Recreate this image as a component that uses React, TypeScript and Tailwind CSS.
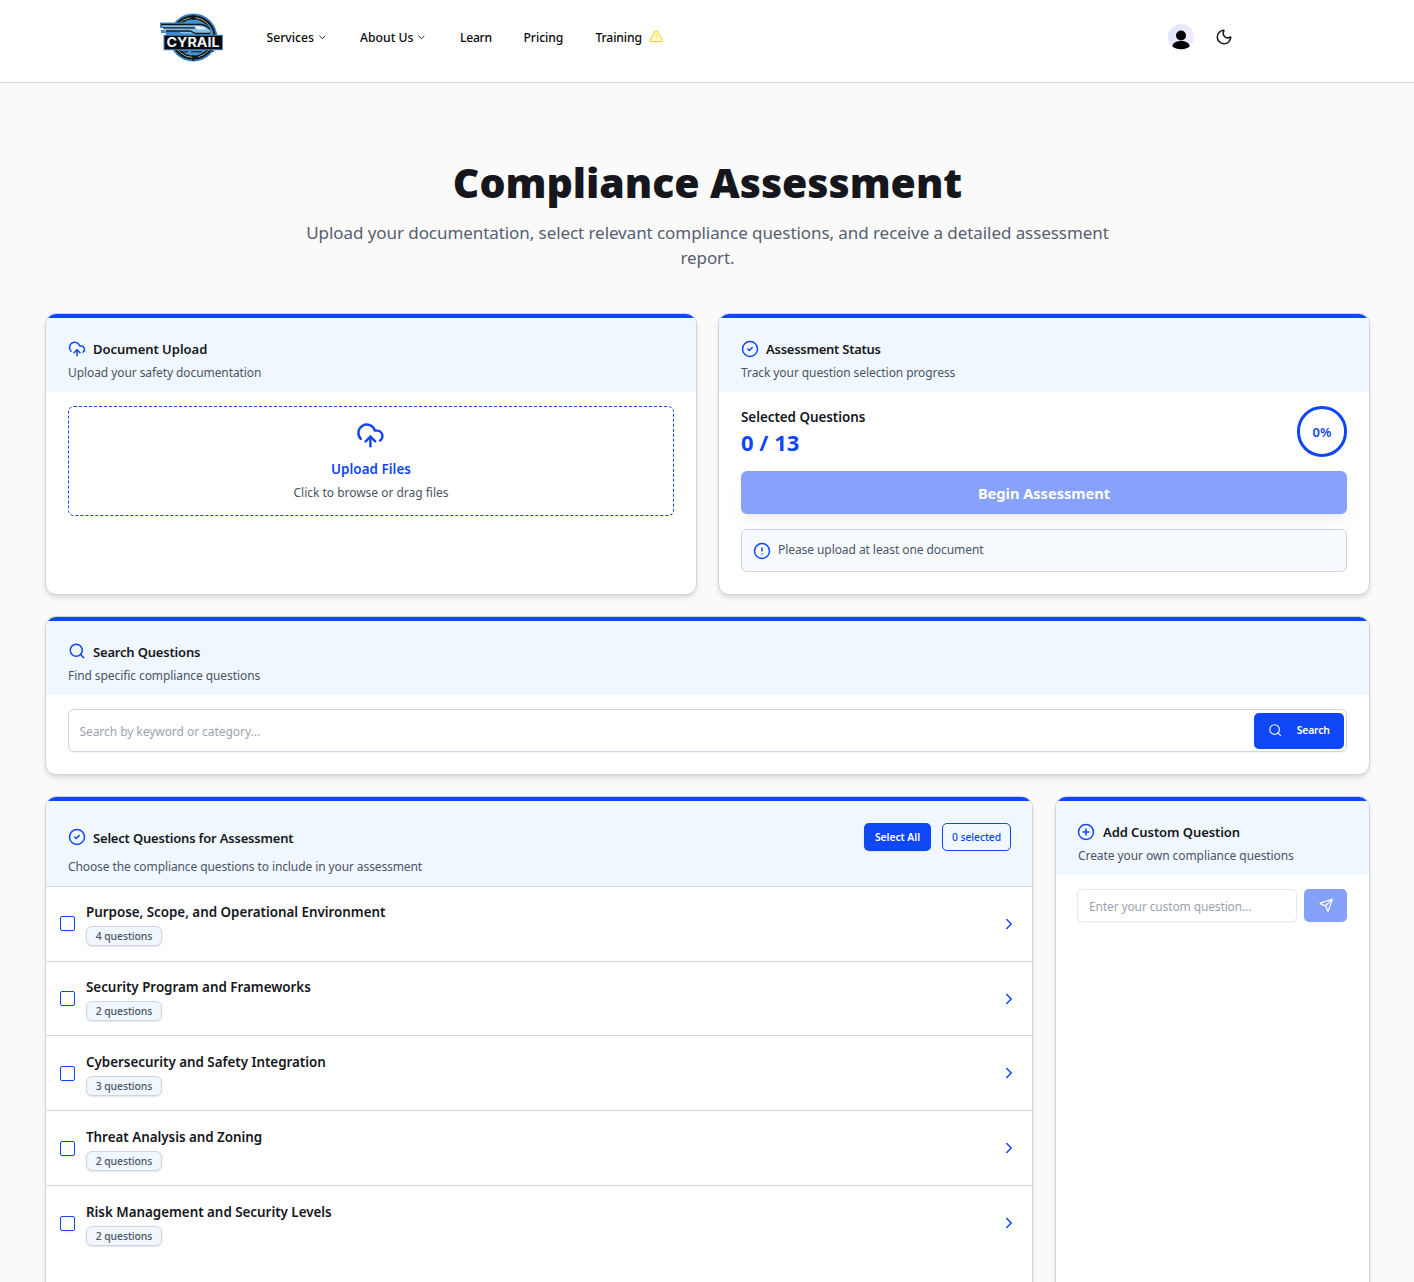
import type { ReactNode } from "react";
import {
  ChevronDown,
  ChevronRight,
  CircleAlert,
  CircleCheck,
  CirclePlus,
  CloudUpload,
  Moon,
  Search,
  Send,
  TriangleAlert,
} from "lucide-react";

function Logo() {
  return (
    <svg width="64" height="50" viewBox="0 0 64 50" className="block">
      <circle cx="33.3" cy="24.5" r="24" fill="#3a7fbd" />
      <circle cx="33.3" cy="24.5" r="22.3" fill="#10161d" />
      <circle cx="33.3" cy="24.5" r="20" fill="none" stroke="#b9ad72" strokeWidth="1" strokeDasharray="26 6" />
      <circle cx="33.3" cy="24.5" r="18" fill="#4a93d0" />
      <path d="M33.3 2v5M33.3 42v6" stroke="#10161d" strokeWidth="1.4" />
      <path d="M0 9.500h38c8 0 13 4 14.500 8.500v5H6v-3H1v-3h4v-2H0z" fill="#3f8bca" />
      <path d="M2 11.800h36c6 0 10.500 3 12.500 6.200L48 20.500H22l-4-2H5" fill="#86bfe8" />
      <path d="M1 11.500h38c5 0 9 2 11 5M3 14.800h32M6 18h24l6 2.500h14" fill="none" stroke="#0d1822" strokeWidth="1.300" />
      <path d="M34 13.200h5c4 .3 6.500 2 7.500 3.300H38z" fill="#e4f2fb" />
      <path d="M3.500 21.800h59.500v15.500h-59.500z" fill="#4a90cc" />
      <path d="M4.500 22.800h57.500v13.400h-57.500z" fill="#07090d" />
      <text
        x="33"
        y="33.900"
        textAnchor="middle"
        textLength="53"
        lengthAdjust="spacingAndGlyphs"
        fontFamily="Inter, sans-serif"
        fontWeight="700"
        fontSize="13"
        fill="#f4f7f8"
      >
        CYRAIL
      </text>
      <path d="M22 38.800h6M31 38.800h11M52 38.300h2" stroke="#10161d" strokeWidth="1" />
    </svg>
  );
}

function Avatar() {
  return (
    <div className="h-[26px] w-[26px] overflow-hidden rounded-full bg-linear-to-r from-[#e0e7ff] to-[#f3e8ff]">
      <svg width="26" height="26" viewBox="0 0 26 26" fill="#000">
        <circle cx="13" cy="11.500" r="5" />
        <path d="M4.300 22.300C5 18.500 8.600 17 13 17s8 1.500 8.700 5.300C19.500 24.500 16.500 25.300 13 25.300s-6.500-.8-8.700-3z" />
      </svg>
    </div>
  );
}

function Card({ className, children }: { className?: string; children: ReactNode }) {
  return (
    <section
      className={
        "overflow-hidden rounded-[11px] border border-[#ced5e1] bg-white shadow-[0_4px_6px_-1px_rgba(0,0,0,0.1),0_2px_4px_-2px_rgba(0,0,0,0.1)] " +
        (className ?? "")
      }
    >
      <div className="h-1 bg-[#0f46f5]" />
      {children}
    </section>
  );
}

function CardHeader({
  icon,
  title,
  text,
  titleClass,
}: {
  icon: ReactNode;
  title: string;
  text: string;
  titleClass: string;
}) {
  return (
    <div className="h-[74px] bg-[#f0f7ff] px-[22px] pt-[22px]">
      <div className="flex h-[18px] items-center gap-[7px] text-[#0f46f5]">
        {icon}
        <h3 className={"text-[13px] leading-[18px] font-semibold text-[#15171c] " + titleClass}>{title}</h3>
      </div>
      <p className="mt-[6px] text-[12px] leading-[18px] tracking-[-0.08px] text-[#4b5565]">{text}</p>
    </div>
  );
}

const groups = [
  { title: "Purpose, Scope, and Operational Environment", count: 4, row: "h-[75px]", lead: "mt-[15px]" },
  { title: "Security Program and Frameworks", count: 2, row: "h-[74px]", lead: "mt-[15px]" },
  { title: "Cybersecurity and Safety Integration", count: 3, row: "h-[75px]", lead: "mt-[16px]" },
  { title: "Threat Analysis and Zoning", count: 2, row: "h-[75px]", lead: "mt-[16px]" },
  { title: "Risk Management and Security Levels", count: 2, row: "h-[75px]", lead: "mt-[16px]" },
];

export default function App() {
  return (
    <div className="h-[1282px] overflow-hidden bg-[#fafafa] font-['Noto_Sans',sans-serif] text-[#15171c]">
      <header className="flex h-[83px] border-b border-[#ced5e1] bg-white pl-[160px]">
        <div className="w-[106.500px] pt-[12.500px]">
          <Logo />
        </div>
        <nav className="flex h-[76px] items-center text-[12.2px] font-medium text-[#09090b]">
          <a className="flex w-[93.500px] items-center gap-[3px]">
            Services <ChevronDown size={10.800} className="-mt-[2px]" />
          </a>
          <a className="flex w-[100px] items-center gap-[3px]">
            About Us <ChevronDown size={10.800} className="-mt-[2px]" />
          </a>
          <a className="w-[63.500px] tracking-[-0.3px]">Learn</a>
          <a className="w-[72px] tracking-[-0.08px]">Pricing</a>
          <a className="flex items-center gap-[7px] tracking-[-0.15px]">
            Training <TriangleAlert size={14.400} className="-mt-[4px] fill-[#fef9e0] text-[#fcd535]" />
          </a>
        </nav>
        <div className="ml-auto flex h-[74px] items-center gap-[21px] pr-[181px]">
          <Avatar />
          <Moon size={18} />
        </div>
      </header>

      <main className="pt-[74px] pr-[44px] pl-[45px]">
        <div className="mb-[42px] flex flex-col items-center text-center">
          <h1 className="h-[62.500px] text-[41px] leading-[51px] font-black tracking-[-0.05px] whitespace-nowrap">
            Compliance Assessment
          </h1>
          <p className="h-[51.500px] w-[830px] text-[17px] leading-[25px] tracking-[-0.07px] text-[#556070]">
            Upload your documentation, select relevant compliance questions, and receive a detailed assessment report.
          </p>
        </div>

        <div className="mb-[21px] grid grid-cols-2 gap-[21px]">
          <Card className="h-[282px]">
            <CardHeader
              icon={<CloudUpload size={18} />}
              title="Document Upload"
              titleClass="tracking-[-0.03px]"
              text="Upload your safety documentation"
            />
            <div className="px-[22px] pt-[14px]">
              <div className="flex h-[110px] flex-col items-center rounded-[6px] border border-dashed border-[#0f46f5] pt-[14px]">
                <CloudUpload size={28.800} className="-ml-px text-[#0f46f5]" />
                <p className="mt-[10px] text-[13.400px] leading-[18px] font-semibold tracking-[0.06px] text-[#0f46f5]">
                  Upload Files
                </p>
                <p className="mt-[6px] text-[12px] leading-[18px] tracking-[-0.02px] text-[#4b5565]">
                  Click to browse or drag files
                </p>
              </div>
            </div>
          </Card>

          <Card className="h-[282px]">
            <CardHeader
              icon={<CircleCheck size={18} />}
              title="Assessment Status"
              titleClass="tracking-[-0.25px]"
              text="Track your question selection progress"
            />
            <div className="px-[22px] pt-[14px]">
              <div className="flex h-[51px] items-center justify-between">
                <div className="pt-[2px]">
                  <p className="text-[13.400px] leading-[20px] font-semibold tracking-[-0.03px]">Selected Questions</p>
                  <p className="text-[22px] leading-[31px] font-bold text-[#0f46f5]">0 / 13</p>
                </div>
                <div className="flex h-[51px] w-[50px] items-center justify-center rounded-full border-[3px] border-[#0f46f5] pt-[2px] text-[13px] font-semibold tracking-[0.2px] text-[#0f46f5]">
                  0%
                </div>
              </div>
              <button className="mt-[14px] flex h-[43px] w-full items-center justify-center rounded-[6px] bg-[#0f46f5] pt-[2px] text-[14.600px] font-bold text-white opacity-50 shadow-[0_10px_15px_-3px_rgba(0,0,0,0.1),0_4px_6px_-4px_rgba(0,0,0,0.1)]">
                Begin Assessment
              </button>
              <div className="mt-[15px] flex h-[43px] items-start gap-[7px] rounded-[6px] border border-[#ced5e1] bg-[#f7faff] px-[11px]">
                <CircleAlert size={18} className="mt-[12px] text-[#0f46f5]" />
                <p className="mt-[11px] text-[12px] leading-[18px] tracking-[-0.07px] text-[#4b5565]">
                  Please upload at least one document
                </p>
              </div>
            </div>
          </Card>
        </div>

        <Card className="mb-[21px] h-[159px]">
          <CardHeader
            icon={<Search size={18} className="-mt-[2px]" />}
            title="Search Questions"
            titleClass="tracking-[-0.18px]"
            text="Find specific compliance questions"
          />
          <div className="px-[22px] pt-[14px]">
            <div className="flex h-[43px] items-center justify-between rounded-[6px] border border-[#ced5e1] pr-[2px] pl-[10.400px] shadow-[0_1px_2px_rgba(0,0,0,0.05)]">
              <span className="pt-[2px] text-[12px] tracking-[-0.05px] text-[#9ca3af]">
                Search by keyword or category...
              </span>
              <button className="flex h-[36px] w-[90px] items-center rounded-[5px] bg-[#0f46f5] pl-[14px] text-[10.400px] font-semibold tracking-[-0.2px] text-white">
                <Search size={14.400} className="-mt-px mr-[14.400px]" strokeWidth={1.800} />
                <span className="pt-px">Search</span>
              </button>
            </div>
          </div>
        </Card>

        <div className="flex items-start gap-[22px]">
          <Card className="h-[520px] w-[988px]">
            <div className="h-[86px] border-b border-[#ced5e1] bg-[#f0f7ff] pt-[22px] pr-[21px] pl-[22px]">
              <div className="flex h-[28px] items-center justify-between">
                <div className="flex items-center gap-[7px] text-[#0f46f5]">
                  <CircleCheck size={18} />
                  <h3 className="mt-[2px] text-[13px] leading-[20px] font-semibold tracking-[-0.19px] text-[#15171c]">
                    Select Questions for Assessment
                  </h3>
                </div>
                <div className="flex gap-[11px] text-[10.400px]">
                  <button className="h-[28px] w-[67px] rounded-[5px] bg-[#0f46f5] pt-px font-semibold tracking-[-0.08px] text-white shadow-[0_1px_2px_rgba(0,0,0,0.08)]">
                    Select All
                  </button>
                  <span className="flex h-[28px] w-[69px] items-center justify-center rounded-[5px] border border-[#0f46f5] pt-[2px] font-medium tracking-[-0.08px] text-[#0f46f5]">
                    0 selected
                  </span>
                </div>
              </div>
              <p className="mt-[7px] text-[12px] leading-[18px] tracking-[-0.1px] text-[#4b5565]">
                Choose the compliance questions to include in your assessment
              </p>
            </div>
            <ul>
              {groups.map((g) => (
                <li key={g.title} className={"flex items-start border-b border-[#ced5e1] px-[14px] last:border-b-0 " + g.row}>
                  <div className={"flex flex-1 gap-[11px] " + g.lead}>
                    <span className="mt-[14px] h-[15px] w-[15px] rounded-[2px] border border-[#0f46f5] shadow-[0_1px_2px_rgba(0,0,0,0.08)]" />
                    <div>
                      <p className="text-[13.400px] leading-[20px] font-semibold tracking-[-0.02px]">{g.title}</p>
                      <span className="mt-[4px] flex h-[20px] w-[76px] items-center justify-center rounded-[6px] border border-[#ced5e1] bg-[#f0f7ff] pt-px text-[10.400px] font-medium tracking-[-0.07px] text-[#4b5565] shadow-[0_1px_2px_rgba(0,0,0,0.1)]">
                        {g.count} questions
                      </span>
                    </div>
                  </div>
                  <ChevronRight size={18} className="mt-[28px] text-[#0f46f5]" />
                </li>
              ))}
            </ul>
          </Card>

          <Card className="h-[520px] flex-1">
            <CardHeader
              icon={<CirclePlus size={18} className="-ml-px" />}
              title="Add Custom Question"
              titleClass="pl-px tracking-[-0.07px]"
              text="Create your own compliance questions"
            />
            <div className="flex gap-[7px] pt-[14px] pr-[22px] pl-[21px]">
              <div className="flex h-[33px] flex-1 items-center rounded-[5px] border border-[#e5e7eb] pl-[11px] shadow-[0_1px_2px_rgba(0,0,0,0.05)]">
                <span className="pt-[2px] text-[12px] tracking-[-0.13px] text-[#9ca3af]">
                  Enter your custom question...
                </span>
              </div>
              <button className="flex h-[33px] w-[43px] items-center justify-center rounded-[5px] bg-[#0f46f5] pl-px text-white opacity-50">
                <Send size={14.400} className="-mt-px" />
              </button>
            </div>
          </Card>
        </div>
      </main>
    </div>
  );
}
